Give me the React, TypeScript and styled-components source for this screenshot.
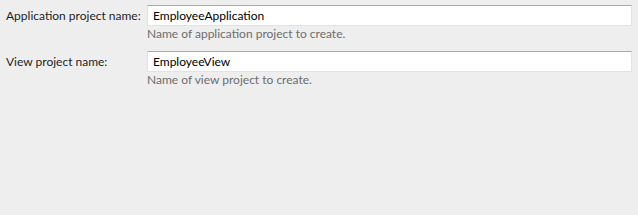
import React from 'react';
import styled, { createGlobalStyle } from 'styled-components';

const GlobalStyle = createGlobalStyle`
  html, body {
    margin: 0;
    padding: 0;
    background: #eeeeee;
  }
  body {
    font-family: Lato, "Open Sans", "Liberation Sans", sans-serif;
    font-size: 12px;
  }
`;

const Page = styled.div`
  width: 638px;
  height: 215px;
  background: #eeeeee;
  box-sizing: border-box;
  padding: 5px 6px 0 5px;
`;

const Form = styled.div`
  display: grid;
  grid-template-columns: 142px 1fr;
`;

const Field = styled.div`
  display: contents;
`;

const Label = styled.label`
  grid-column: 1;
  height: 21px;
  line-height: 21px;
  padding-left: 1px;
  color: #1e1e1e;
  white-space: nowrap;
`;

const Input = styled.input`
  grid-column: 2;
  box-sizing: border-box;
  height: 21px;
  width: 100%;
  margin: 0;
  padding: 0 5px;
  border: 1px solid #e3e3e3;
  border-top-color: #ababab;
  background: #ffffff;
  color: #000000;
  font-family: inherit;
  font-size: 12px;
  outline: none;
`;

const Hint = styled.div`
  grid-column: 2;
  height: 25px;
  line-height: 16px;
  color: #6d6d6d;
`;

const fields = [
  { label: 'Application project name:', value: 'EmployeeApplication', hint: 'Name of application project to create.' },
  { label: 'View project name:', value: 'EmployeeView', hint: 'Name of view project to create.' },
];

const App = () => (
  <Page>
    <GlobalStyle />
    <Form>
      {fields.map((f) => (
        <Field key={f.label}>
          <Label>{f.label}</Label>
          <Input defaultValue={f.value} />
          <Hint>{f.hint}</Hint>
        </Field>
      ))}
    </Form>
  </Page>
);

export default App;
